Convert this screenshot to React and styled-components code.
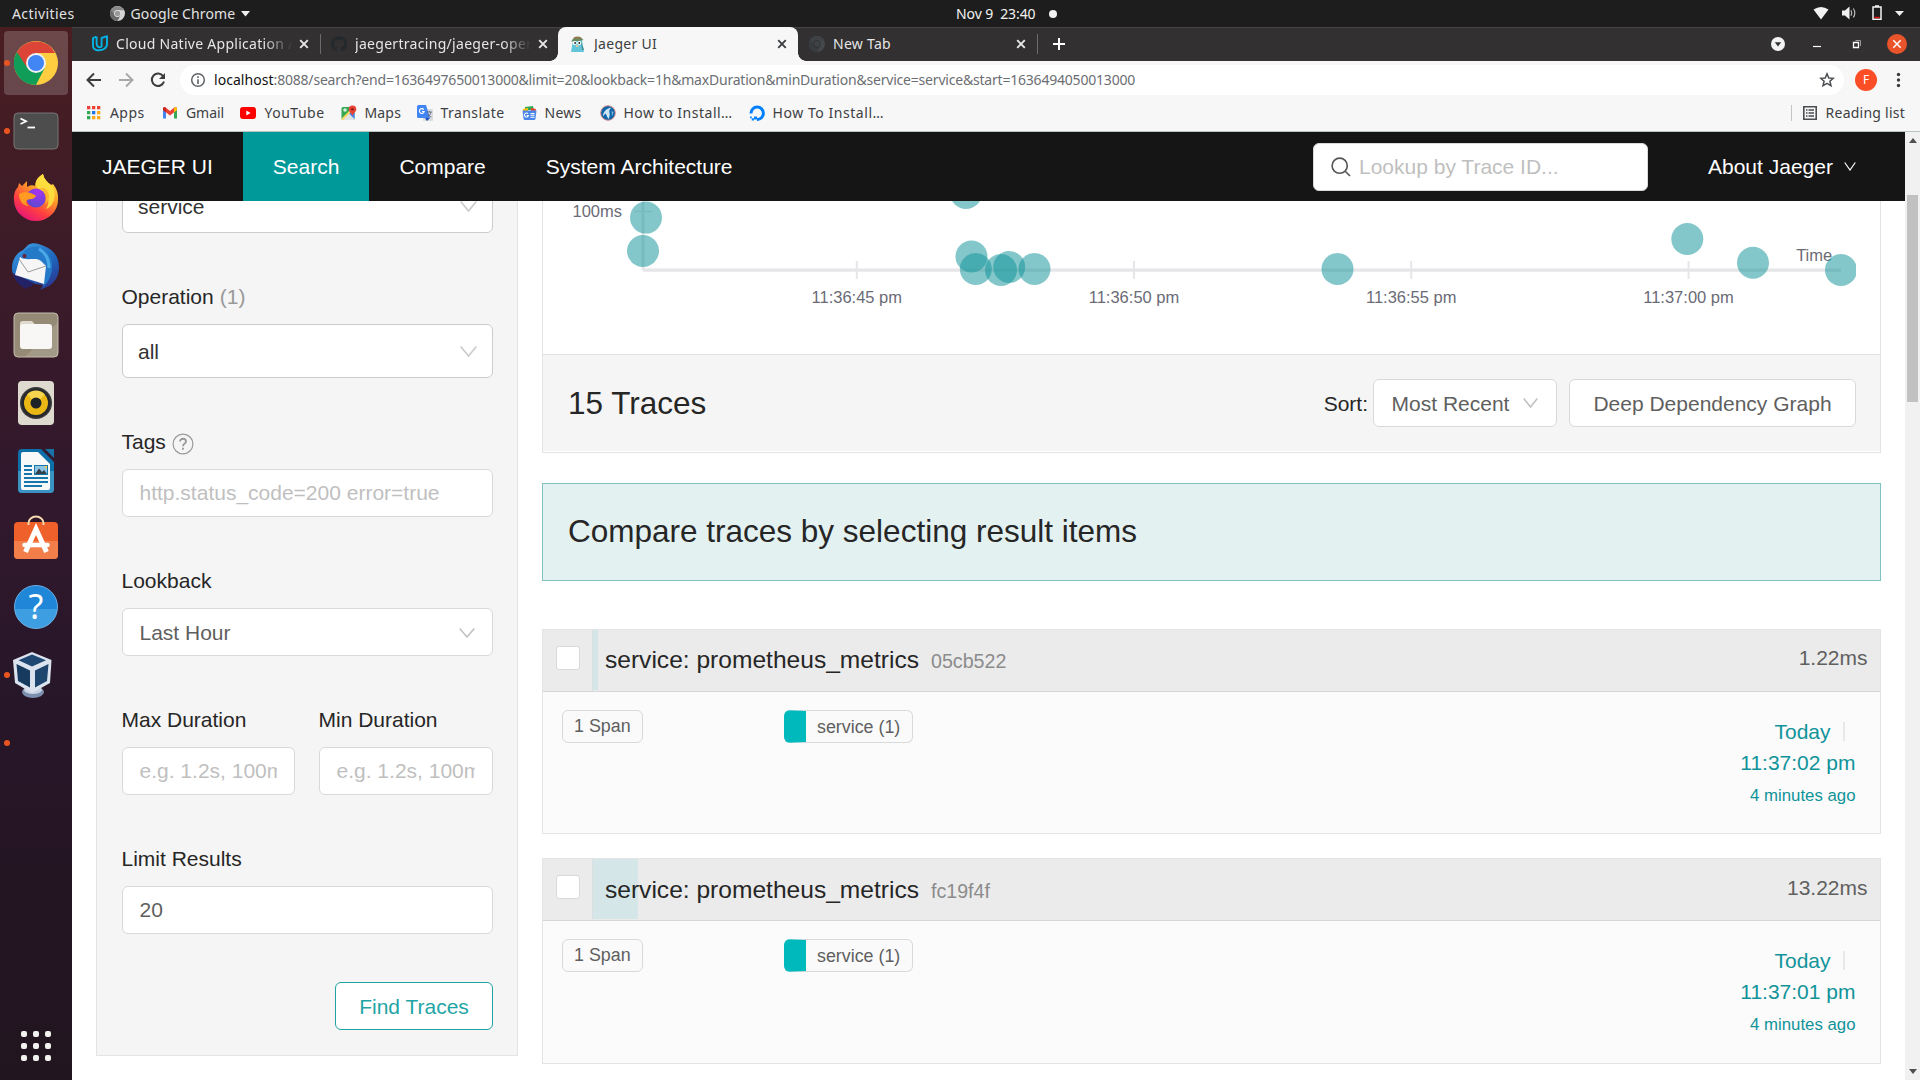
import React from "react";
import styled, { createGlobalStyle, css } from "styled-components";

const GlobalStyle = createGlobalStyle`
  * { box-sizing: border-box; }
  html, body { margin: 0; padding: 0; overflow: hidden; background: #fff; }
  svg { display: block; flex: none; }
`;

const systemFont = '"Noto Sans", "Open Sans", sans-serif';
const pageFont = '"Liberation Sans", Arial, sans-serif';

/* ---------- desktop ---------- */

const Desktop = styled.div`
  width: 1920px;
  height: 1080px;
  display: flex;
  flex-direction: column;
  overflow: hidden;
  font-family: ${systemFont};
  font-size: 14px;
`;

const UiText = styled.span`
  white-space: pre;
  line-height: 20px;
  letter-spacing: ${(p) => p.$track || 0}px;
`;

const TopBar = styled.header`
  height: 27px;
  flex: none;
  background: #1d1d1d;
  color: #e2e2e2;
  display: flex;
  align-items: center;
`;

const TopLeft = styled.div`
  width: 956px;
  display: flex;
  align-items: center;
  padding-left: 12px;
`;

const AppMenu = styled.div`
  display: flex;
  align-items: center;
  gap: 6px;
  margin-left: 35px;
`;

const Clock = styled.div`
  display: flex;
  align-items: center;
  gap: 14px;
  color: #f2f2f2;
`;

const Dot = styled.i`
  width: ${(p) => p.$size}px;
  height: ${(p) => p.$size}px;
  border-radius: 50%;
  background: ${(p) => p.$color};
  flex: none;
`;

const Status = styled.div`
  margin-left: auto;
  display: flex;
  align-items: center;
  padding-right: 16px;
`;

const Body = styled.div`
  flex: 1;
  min-height: 0;
  display: flex;
`;

/* ---------- dock ---------- */

const Dock = styled.aside`
  width: 72px;
  flex: none;
  display: flex;
  flex-direction: column;
  align-items: center;
  gap: 4px;
  padding-top: 4px;
  background: linear-gradient(180deg, #4a1e20 0%, #3f1c27 16%, #31182d 45%, #281629 62%, #21151f 100%);
`;

const DockItem = styled.div`
  position: relative;
  width: 64px;
  height: 64px;
  border-radius: 4px;
  display: flex;
  align-items: center;
  justify-content: center;
  padding-bottom: ${(p) => p.$lift || 0}px;
  background: ${(p) => (p.$focused ? "rgba(255,255,255,0.19)" : "transparent")};
  ${(p) =>
    p.$running &&
    css`
      &::before {
        content: "";
        position: absolute;
        left: 0;
        top: 29px;
        width: 6px;
        height: 6px;
        border-radius: 50%;
        background: #e95420;
      }
    `}
`;

const AppGrid = styled.div`
  margin-top: auto;
  margin-bottom: 19px;
  display: grid;
  grid-template-columns: repeat(3, 6px);
  grid-auto-rows: 6px;
  gap: 6px;
`;

const GridDot = styled.i`
  background: #f2f2f0;
  border-radius: 2px;
`;

/* ---------- browser ---------- */

const Browser = styled.main`
  flex: 1;
  min-width: 0;
  display: flex;
  flex-direction: column;
`;

const TabStrip = styled.div`
  height: 34px;
  flex: none;
  background: #323031;
  border-top: 1px solid #464445;
  display: flex;
  align-items: stretch;
  padding-left: 9px;
`;

const Tab = styled.div`
  position: relative;
  width: 239px;
  display: flex;
  align-items: center;
  padding: 0 8px 2px 11px;
  gap: 8px;
  color: ${(p) => (p.$active ? "#3c4043" : "#e6e6e6")};
  ${(p) =>
    p.$active &&
    css`
      background: #f7f7f7;
      width: 240px;
      margin: -1px 0 0 -1px;
      padding: 1px 8px 2px 12px;
      border-radius: 8px 8px 0 0;
      &::before,
      &::after {
        content: "";
        position: absolute;
        bottom: 0;
        width: 8px;
        height: 8px;
      }
      &::before {
        left: -8px;
        background: radial-gradient(circle at 0 0, #323031 7.5px, #f7f7f7 8px);
      }
      &::after {
        right: -8px;
        background: radial-gradient(circle at 100% 0, #323031 7.5px, #f7f7f7 8px);
      }
    `}
  ${(p) =>
    p.$divided &&
    css`
      &::after {
        content: "";
        position: absolute;
        right: -1px;
        top: 6px;
        width: 1px;
        height: 20px;
        background: #6d6b6c;
      }
    `}
`;

const TabLabel = styled.div`
  flex: 1;
  min-width: 0;
  overflow: hidden;
  white-space: nowrap;
  margin-right: -4px;
  ${(p) => p.$fade && "mask-image: linear-gradient(90deg, #000 84%, transparent 100%);"}
`;

const NewTab = styled.div`
  display: flex;
  align-items: center;
  padding: 0 0 2px 15px;
`;

const WindowControls = styled.div`
  margin-left: auto;
  display: flex;
  align-items: center;
  padding: 0 13px 1px 0;
`;

const Toolbar = styled.div`
  height: 38px;
  flex: none;
  background: #f7f7f7;
  display: flex;
  align-items: center;
  padding: 0 19px 0 13px;
`;

const NavButtons = styled.div`
  display: flex;
  gap: 14px;
  width: 95px;
`;

const AddressBar = styled.div`
  flex: 1;
  height: 30px;
  border-radius: 15px;
  background: #fff;
  display: flex;
  align-items: center;
  padding: 0 9px 1px 10px;
  gap: 8px;
  color: #6b6e72;
`;

const Url = styled.div`
  flex: 1;
  white-space: pre;
  letter-spacing: -0.204px;
  b {
    font-weight: 400;
    color: #111;
    letter-spacing: 0.05px;
  }
`;

const Avatar = styled.div`
  width: 22px;
  height: 22px;
  border-radius: 50%;
  background: #fb4e26;
  color: #fff;
  font-size: 12px;
  line-height: 22px;
  text-align: center;
  margin: 0 19px 0 11px;
`;

const Bookmarks = styled.div`
  height: 33px;
  flex: none;
  background: #f7f7f7;
  border-bottom: 1px solid #b9c2bf;
  display: flex;
  align-items: center;
  padding: 0 15px 5px 15px;
  color: #3c4043;
`;

const Bookmark = styled.div`
  display: flex;
  align-items: center;
  gap: 8px;
  width: ${(p) => p.$width}px;
  svg { margin-right: ${(p) => p.$nudge || 0}px; }
`;

const ReadingList = styled.div`
  margin-left: auto;
  display: flex;
  align-items: center;
  gap: 9px;
  border-left: 1px solid #c4c4c4;
  height: 16px;
  padding-left: 11px;
`;

/* ---------- page ---------- */

const Viewport = styled.div`
  flex: 1;
  min-height: 0;
  display: flex;
  background: #fff;
`;

const Page = styled.div`
  flex: 1;
  min-width: 0;
  display: flex;
  flex-direction: column;
  font-family: ${pageFont};
  font-size: 21px;
  color: #262626;
`;

const NavBar = styled.nav`
  height: 69px;
  flex: none;
  background: #151515;
  color: #fff;
  display: flex;
  align-items: center;
`;

const NavItem = styled.div`
  height: 100%;
  padding: 0 30px;
  display: flex;
  align-items: center;
  white-space: nowrap;
  background: ${(p) => (p.$active ? "#009999" : "transparent")};
`;

const TraceLookup = styled.div`
  margin-left: auto;
  width: 335px;
  height: 48px;
  background: #fff;
  border: 1px solid #d9d9d9;
  border-radius: 6px;
  display: flex;
  align-items: center;
  gap: 8px;
  padding-left: 17px;
  color: #bfbfbf;
`;

const About = styled.div`
  margin-left: 60px;
  width: 197px;
  display: flex;
  align-items: center;
  gap: 11px;
`;

const Scroller = styled.div`
  flex: 1;
  min-height: 0;
  overflow: hidden;
`;

const Columns = styled.div`
  margin-top: -22px;
  padding: 0 24px;
  display: grid;
  grid-template-columns: 422px 1339px;
  gap: 24px;
  align-items: start;
`;

const SearchPanel = styled.section`
  background: #f5f5f5;
  border: 1px solid #e4e4e4;
  border-top: 0;
  padding: 0 24px 25px 25px;
`;

const FieldRow = styled.div`
  display: grid;
  grid-template-columns: ${(p) => (p.$split ? "173px 174px" : "1fr")};
  gap: 24px;
  margin-bottom: 48px;
`;

const Label = styled.div`
  height: 43px;
  line-height: 31.5px;
  display: flex;
  gap: 6px;
  align-items: flex-start;
  margin-left: -0.5px;
  svg { margin-top: 7px; }
`;

const Muted = styled.span`
  color: #999;
`;

const Control = styled.div`
  height: ${(p) => (p.$tall ? 54 : 48)}px;
  border: 1px solid ${(p) => (p.$tall ? "#cccccc" : "#d9d9d9")};
  border-radius: 6px;
  background: #fff;
  padding: ${(p) => (p.$tall ? "1px 15px 0" : p.$select ? "1px 17px 0 16.5px" : "0 17px 0 16.5px")};
  display: flex;
  align-items: center;
  justify-content: space-between;
  color: ${(p) => (p.$placeholder ? "#bfbfbf" : p.$tall ? "#333" : "#5f5f5f")};
  span { overflow: hidden; white-space: nowrap; line-height: 32px; }
`;

const Actions = styled.div`
  display: flex;
  justify-content: flex-end;
`;

const Button = styled.div`
  height: 48px;
  width: ${(p) => p.$width}px;
  padding-top: 2px;
  border: 1px solid ${(p) => (p.$primary ? "#1fa3a3" : "#d9d9d9")};
  border-radius: 6px;
  background: #fff;
  color: ${(p) => (p.$primary ? "#1fa5a5" : "#5f5f5f")};
  display: flex;
  align-items: center;
  justify-content: center;
  gap: 14px;
  white-space: nowrap;
  svg { margin-top: -2px; }
`;

const Summary = styled.section`
  height: 274px;
  border: 1px solid #e4e4e4;
  border-top: 0;
`;

const SummaryHeader = styled.div`
  height: 97px;
  background: #f5f5f5;
  border-top: 1px solid #e2e2e2;
  display: flex;
  align-items: center;
  padding: 0 24px 0 25px;
`;

const Heading = styled.h2`
  margin: 0;
  font-size: 31.5px;
  font-weight: 400;
  line-height: 38px;
  flex: 1;
`;

const SortLabel = styled.span`
  margin-right: 5px;
  padding-top: 1px;
`;

const Spacer = styled.i`
  width: 12px;
`;

const CompareBanner = styled.section`
  height: 98px;
  margin-top: 30px;
  background: #e4f1f1;
  border: 1px solid #80c1c2;
  display: flex;
  align-items: center;
  padding: 0 0 2px 25px;
`;

const TraceList = styled.div`
  margin-top: 48px;
  display: flex;
  flex-direction: column;
  gap: 24px;
`;

const TraceCard = styled.article`
  height: 205.4px;
  border: 1px solid #e4e4e4;
  background: #fbfbfb;
`;

const TraceHeader = styled.div`
  height: 62px;
  background: #ebebeb;
  border-bottom: 1px solid #d6d6d6;
  display: flex;
`;

const CheckCell = styled.div`
  width: 49px;
  padding: 16px 0 0 13px;
`;

const Checkbox = styled.div`
  width: 24px;
  height: 24px;
  border: 1px solid #d9d9d9;
  border-radius: 3px;
  background: #fff;
`;

const TitleCell = styled.div`
  position: relative;
  flex: 1;
  display: flex;
  justify-content: space-between;
  padding: 12.2px 12.5px 0 12px;
  line-height: 36px;
  border-left: 1px solid #dadfe0;
`;

const DurationBar = styled.i`
  position: absolute;
  left: 0;
  top: 0;
  bottom: 1px;
  width: ${(p) => p.$percent}%;
  background: #d5e6e9;
`;

const TraceTitle = styled.h3`
  position: relative;
  margin: 0;
  font-size: 24.57px;
  font-weight: 400;
  small {
    margin-left: 12px;
    font-size: 19.66px;
    color: #8c8c8c;
  }
`;

const Duration = styled.span`
  position: relative;
  color: #5f5f5f;
  line-height: 32px;
`;

const TraceBody = styled.div`
  display: grid;
  grid-template-columns: 222px 1fr auto;
  padding: 18px 24.5px 0 19px;
  align-items: start;
`;

const Tag = styled.div`
  height: 33px;
  width: max-content;
  border: 1px solid #d9d9d9;
  border-radius: 6px;
  background: #fafafa;
  color: #5f5f5f;
  font-size: 17.85px;
  line-height: 31.2px;
  padding: 0 11.4px 0 11px;
  ${(p) =>
    p.$accent &&
    css`
      border-left: 22px solid ${p.$accent};
      line-height: 32px;
    `}
`;

const Started = styled.div`
  padding-top: 6px;
  text-align: right;
  line-height: 31px;
  color: #11939a;
`;

const DayLine = styled.div`
  display: flex;
  justify-content: flex-end;
  align-items: center;
  gap: 12px;
  padding-right: 11px;
  &::after {
    content: "";
    width: 2px;
    height: 19px;
    background: #e8e8e8;
  }
`;

const Ago = styled.div`
  font-size: 16.8px;
  padding-top: 1.5px;
`;

const Scrollbar = styled.div`
  width: 15px;
  flex: none;
  background: #f1f1f1;
  display: flex;
  flex-direction: column;
  align-items: center;
  padding: 6px 0;
`;

const Thumb = styled.i`
  width: 11px;
  height: 207px;
  margin: 52px 0 auto;
  background: #c1c1c1;
`;

const Arrow = styled.i`
  border: 4px solid transparent;
  border-width: 0 4.5px 5px;
  border-bottom-color: #505050;
  ${(p) => p.$down && "transform: rotate(180deg);"}
`;

/* ---------- drawings ---------- */

const Chevron = ({ w = 14, h = 9, color = "#bfbfbf", stroke = 1.5 }) => (
  <svg width={w} height={h} viewBox={`0 0 ${w} ${h}`} fill="none" stroke={color} strokeWidth={stroke}>
    <path d={`M0.7 0.5 L${w / 2} ${h - 1} L${w - 0.7} 0.5`} />
  </svg>
);

const ChromeLogo = ({ size = 44, mono, dark }) => {
  const [r, g, y, b, ring] = dark
    ? ["#3f4245", "#393c3f", "#45484b", "#3f4245", "#2f2f30"]
    : mono
    ? ["#8a8a8a", "#6a6a6a", "#d4d4d4", "#9a9a9a", "#e8e8e8"]
    : ["#db4437", "#0f9d58", "#ffcd40", "#4285f4", "#f1f1f1"];
  return (
    <svg width={size} height={size} viewBox="0 0 48 48">
      <circle cx="24" cy="24" r="24" fill={y} />
      <path d="M24 24 L3.2 12 A24 24 0 0 1 44.8 13 L45 13.2 L24 13.2z" fill={r} />
      <path d="M3.2 12 A24 24 0 0 0 24 48 L33.5 29.5 L24 24z" fill={g} />
      <path d="M3.2 12 L14.6 29.5 L24 24 L24 12z" fill={r} />
      <circle cx="24" cy="24" r="10.9" fill={ring} />
      <circle cx="24" cy="24" r="8.8" fill={b} />
    </svg>
  );
};

const Terminal = () => (
  <svg width="46" height="38" viewBox="0 0 46 38">
    <rect x="1" y="1" width="44" height="36" rx="4" fill="#4d4d4d" stroke="#777" strokeWidth="1" />
    <path d="M7.5 6.5 L13 9.3 L7.5 12" fill="none" stroke="#fff" strokeWidth="1.8" />
    <path d="M14.5 15.5h7.5" stroke="#fff" strokeWidth="1.8" />
  </svg>
);

const Firefox = () => (
  <svg width="46" height="48" viewBox="0 0 46 48">
    <defs>
      <linearGradient id="ffBody" x1="0.85" y1="0" x2="0.25" y2="1">
        <stop offset="0" stopColor="#fff04a" />
        <stop offset="0.4" stopColor="#ff9a28" />
        <stop offset="0.7" stopColor="#ff4040" />
        <stop offset="1" stopColor="#e5117e" />
      </linearGradient>
      <radialGradient id="ffCore" cx="0.6" cy="0.2" r="0.8">
        <stop offset="0" stopColor="#a832f0" />
        <stop offset="1" stopColor="#5a4ad0" />
      </radialGradient>
    </defs>
    <path d="M5 14 L6 10 L9 13 L14 8 V14 C17 12 20 12 22.500 13 C22 8 25 4 30 1 C31 6 34 9 38 12 L40 11 C44 16 45.500 21 45 27 A22 21 0 0 1 1 27 C0.500 22 2 17 5 14z" fill="url(#ffBody)" />
    <path d="M22.500 13 C22 8 25 4 30 1 C31 6 34 9 38 12 C44 17 43 33 33 36 C38 29 35 20 28 18z" fill="#ffe03f" opacity="0.9" />
    <circle cx="23" cy="25" r="9.600" fill="url(#ffCore)" />
    <path d="M6 21 C11 18 17 19 23 22.500 C22 26 18 26 15 26.500 C12 28 13 31 16 33 C10 33 6 28 6 21z" fill="#ff9a22" />
    <path d="M26 15 C33 18 35 25 32 31 C38 27 37 18 31 15z" fill="#ffb52d" />
  </svg>
);

const Thunderbird = () => (
  <svg width="50" height="50" viewBox="0 0 50 50">
    <defs>
      <linearGradient id="tb" x1="0.2" y1="0" x2="0.8" y2="1">
        <stop offset="0" stopColor="#3d9be0" />
        <stop offset="0.5" stopColor="#1e68bf" />
        <stop offset="1" stopColor="#2a3590" />
      </linearGradient>
    </defs>
    <path d="M17 3c4-3 10-2 16 1 9 3 15 11 15 21 0 9-4 15-10 19l-9 4 3-5-14-2C8 42 1 36 1 26 1 18 5 11 12 8z" fill="url(#tb)" />
    <path d="M2 31c1 7 6 13 14 16l2-4 1 3 4-5z" fill="#242266" />
    <path d="M11 15c1-7 7-11 15-10 8 1 14 7 15 16 1 8-2 18-9 24 2-9 2-19-3-25-5-5-12-1-18-5z" fill="#2479c8" />
    <path d="M28 7c7 4 10 10 10 19" fill="none" stroke="#4ba9e8" strokeWidth="3" />
    <path d="M9 15 C15 20 26 14 31 20 L35 24 L33 42 L4 33z" fill="#f6f6f6" />
    <path d="M8 17 L17 30 L35 24" fill="none" stroke="#9b9b9b" strokeWidth="1" />
    <circle cx="13.500" cy="14" r="2" fill="#6d2338" />
  </svg>
);

const Files = () => (
  <svg width="46" height="46" viewBox="0 0 46 46">
    <rect x="1" y="1" width="44" height="44" rx="4" fill="#958a76" />
    <path d="M12 45 L45 10 V41a4 4 0 0 1-4 4z" fill="#a39987" />
    <rect x="1" y="1" width="44" height="44" rx="4" fill="none" stroke="#c4bdae" />
    <path d="M7 12a2.500 2.500 0 0 1 2.500-3H19l3 3.500V18H7z" fill="#dedad0" />
    <rect x="7" y="12" width="32" height="25" rx="3" fill="#f8f7f5" />
  </svg>
);

const Speaker = () => (
  <svg width="38" height="46" viewBox="0 0 38 46">
    <rect x="1" y="1" width="36" height="44" rx="4" fill="#dfdad0" />
    <circle cx="19" cy="23" r="16" fill="#3a3a3a" />
    <circle cx="19" cy="23" r="14.500" fill="#26282b" />
    <circle cx="19" cy="23" r="12" fill="#eab815" />
    <path d="M19 23 L10 14.500 A12 12 0 0 1 28 14.500z" fill="#f6d44e" />
    <circle cx="19" cy="23" r="5.500" fill="#1d2226" />
  </svg>
);

const Writer = () => (
  <svg width="38" height="46" viewBox="0 0 38 46">
    <path d="M5 1h19l13 13v27a4 4 0 0 1-4 4H5a4 4 0 0 1-4-4V5a4 4 0 0 1 4-4z" fill="#0d6fa8" />
    <path d="M1 23h36v18a4 4 0 0 1-4 4H5a4 4 0 0 1-4-4z" fill="#3b93c4" />
    <path d="M28 1h9v9z" fill="#1772a6" />
    <path d="M6 4h15l12 12v24a2 2 0 0 1-2 2H6a2 2 0 0 1-2-2V6a2 2 0 0 1 2-2z" fill="#f7f8f8" />
    <path d="M7 18h8M7 22h8M7 26h8M7 30h24M7 34h24M7 38h18" stroke="#1478ac" strokeWidth="1.900" />
    <rect x="17.500" y="17.500" width="13" height="9" fill="#8cc5e4" stroke="#1478ac" />
    <path d="M18 26 L22 20.500 L25 24 L27 22 L30 26z" fill="#333f49" />
    <path d="M27 18h3v3z" fill="#f7cc46" />
  </svg>
);

const SoftwareIcon = () => (
  <svg width="46" height="46" viewBox="0 0 46 46">
    <rect x="1" y="8" width="44" height="37" rx="4" fill="#f0602a" />
    <path d="M1 27h44v14a4 4 0 0 1-4 4H5a4 4 0 0 1-4-4z" fill="#f37e4a" />
    <path d="M15.500 11V9a7.500 6.500 0 0 1 15 0v2" fill="none" stroke="#f4d9ae" strokeWidth="2" />
    <path d="M12.500 38 L23 15 L33.500 38" fill="none" stroke="#fff" strokeWidth="5" />
    <path d="M11.500 31h23" stroke="#fff" strokeWidth="4.500" strokeLinecap="round" />
  </svg>
);

const HelpGlyph = styled.div`
  width: 44px;
  height: 44px;
  border-radius: 50%;
  background: linear-gradient(180deg, #1f86d8 55%, #3d9fe2 55%);
  border: 1px solid #6cb2e8;
  color: #fff;
  font: 34px/41px "Noto Sans", sans-serif;
  text-align: center;
`;

const VirtualBox = () => (
  <svg width="54" height="50" viewBox="0 0 54 50">
    <ellipse cx="24" cy="42" rx="11" ry="6" fill="#7c8fae" />
    <ellipse cx="24" cy="40" rx="9" ry="4" fill="#c8d3e4" />
    <path d="M23 2 L42.500 10 L41 33 L23 43 L6 33 L4 10z" fill="#dbe3ee" />
    <path d="M23 4.500 L37 10.200 L23 16.500 L9.500 10.200z" fill="#1e4872" />
    <path d="M7.500 14 L21 20.500 V37.500 L9 31z" fill="#173a5f" />
    <path d="M26 20.500 L39.500 14 L38 31 L26 37.500z" fill="#1d456e" />
  </svg>
);

const Udacity = () => (
  <svg width="16" height="17" viewBox="0 0 16 17" fill="none" stroke="#02b3e4" strokeWidth="1.900">
    <path d="M4.600 1.700 L1 3.200 V10.500 a4.500 4.500 0 0 0 5 4.700" strokeLinejoin="round" />
    <path d="M4.600 1.700 V8.500 c0 3.500 2.500 4.500 5 3 V3 L15 1.200 V9 c0 4-4 6.500-9 6.200" strokeLinejoin="round" />
  </svg>
);

const GitHub = () => (
  <svg width="16" height="16" viewBox="0 0 16 16" fill="#24292e">
    <path d="M8 0C3.580 0 0 3.580 0 8c0 3.540 2.290 6.530 5.470 7.590.4.070.55-.17.55-.38v-1.490c-2.010.37-2.530-.49-2.690-.94-.09-.23-.48-.94-.82-1.130-.28-.15-.68-.52-.01-.53.63-.01 1.080.58 1.230.82.72 1.210 1.870.87 2.330.66.070-.52.28-.87.510-1.070-1.780-.2-3.640-.89-3.640-3.950 0-.87.310-1.590.82-2.150-.08-.2-.36-1.020.08-2.120 0 0 .67-.21 2.200.82a7.600 7.600 0 0 1 4 0c1.530-1.040 2.200-.82 2.200-.82.44 1.100.16 1.920.08 2.120.51.56.82 1.270.82 2.150 0 3.070-1.870 3.750-3.650 3.950.29.25.54.73.54 1.480v2.190c0 .21.15.46.55.38A8 8 0 0 0 16 8c0-4.420-3.580-8-8-8z" />
  </svg>
);

const Gopher = () => (
  <svg width="16" height="17" viewBox="0 0 16 17">
    <path d="M3 5h9l2 12H1z" fill="#62c6d8" />
    <path d="M1 6.500 L4 2.500 a4.500 3 0 0 1 7 0 L13.500 5 L9 6z" fill="#6d8a62" />
    <path d="M4 2.800h7" stroke="#b0703c" strokeWidth="1" />
    <circle cx="4.800" cy="8" r="2.100" fill="#fff" />
    <circle cx="9.300" cy="8" r="2.100" fill="#fff" />
    <circle cx="5.100" cy="8" r="0.900" fill="#1b1b1b" />
    <circle cx="9.300" cy="8" r="0.900" fill="#1b1b1b" />
    <path d="M6 10h2.500v2H6z" fill="#d8c6a4" />
    <path d="M11 6l3 9h-2z" fill="#4a8f93" />
  </svg>
);

const Close = ({ color = "#e8e8e8" }) => (
  <svg width="16" height="16" viewBox="0 0 16 16" stroke={color} strokeWidth="1.900">
    <path d="M4.200 4.200 L11.800 11.800 M11.800 4.200 L4.200 11.800" />
  </svg>
);

const appTiles = ["#ea4335", "#ea4335", "#ea4335", "#34a853", "#1a73e8", "#fbaa19", "#34a853", "#fbaa19", "#fbaa19"];

const AppsIcon = () => (
  <svg width="14" height="14" viewBox="0 0 14 14">
    {appTiles.map((c, i) => (
      <rect key={i} x={(i % 3) * 5} y={Math.floor(i / 3) * 5} width="3.300" height="3.300" fill={c} />
    ))}
  </svg>
);

const GmailIcon = () => (
  <svg width="16" height="12" viewBox="0 0 16 12">
    <path d="M1 2.500v9h3V5z" fill="#4285f4" />
    <path d="M15 2.500v9h-3V5z" fill="#34a853" />
    <path d="M1 3V1.500C1 0 3 0 4 .800L8 4l4-3.200C13 0 15 0 15 1.500V3L8 8.500z" fill="#ea4335" />
    <path d="M12 .800c1-.800 3-.800 3 .700V3l-3 2.400z" fill="#fbbc04" />
    <path d="M1 1.500C1 0 3 0 4 .800v4.600L1 3z" fill="#c5221f" />
  </svg>
);

const YouTubeIcon = () => (
  <svg width="16" height="12" viewBox="0 0 16 12">
    <rect width="16" height="12" rx="3" fill="#f00" />
    <path d="M6.300 3.500 L10.600 6 L6.300 8.500z" fill="#fff" />
  </svg>
);

const MapsIcon = () => (
  <svg width="16" height="16" viewBox="0 0 16 16">
    <rect x="0.500" y="2" width="13" height="13" rx="1.500" fill="#34a853" />
    <path d="M0.500 15 L8 7.500 L14 13.500 L12.500 15z" fill="#dfe3e6" />
    <path d="M8 8.500 L13.500 14 V7z" fill="#4285f4" />
    <path d="M1 14.500 L12 3.500" stroke="#fdd663" strokeWidth="2" />
    <circle cx="4" cy="5" r="1.800" fill="#d7efdd" />
    <path d="M11.500 0.500a3.800 3.800 0 0 1 3.800 3.800c0 2.500-2.800 3.700-3.800 7-1-3.300-3.800-4.500-3.800-7A3.800 3.800 0 0 1 11.500.5z" fill="#ea4335" />
    <circle cx="11.500" cy="4.200" r="1.300" fill="#8c1d18" />
  </svg>
);

const TranslateIcon = () => (
  <svg width="16" height="16" viewBox="0 0 16 16">
    <rect x="6" y="4" width="10" height="12" rx="1" fill="#dadce0" />
    <path d="M1.500 0h7.500l4 13H1.500A1.500 1.500 0 0 1 0 11.500v-10A1.500 1.500 0 0 1 1.500 0z" fill="#4285f4" />
    <path d="M8 13h5l-3 3z" fill="#1c51b5" />
    <path d="M6.800 4.600 A2.400 2.400 0 1 0 7.200 6.500 H5" fill="none" stroke="#fff" strokeWidth="1.100" />
    <path d="M9.800 7h5M12.300 6v1M14 7c-.5 2.500-2 4-3.500 5M11 9c.8 1.500 2 2.500 3.500 3" fill="none" stroke="#5f6b7a" strokeWidth="0.900" />
  </svg>
);

const NewsIcon = () => (
  <svg width="15" height="14" viewBox="0 0 15 14">
    <path d="M3 1l8-1 1 4H3z" fill="#34a853" />
    <path d="M1 3l5-1v4H1z" fill="#fbbc04" />
    <path d="M9 2l5 1-1 4H9z" fill="#ea4335" />
    <path d="M0.500 4.500h14l-1 8a1.500 1.500 0 0 1-1.500 1.500H3a1.500 1.500 0 0 1-1.500-1.500z" fill="#4a86e8" />
    <path d="M6 7.700A2 2 0 1 0 6.400 9.500H4.800M8.500 7.500h4M8.500 9.300h4M8.500 11.200h4" fill="none" stroke="#fff" strokeWidth="1.100" />
  </svg>
);

const GlobeBadge = () => (
  <svg width="16" height="16" viewBox="0 0 16 16">
    <circle cx="8" cy="8" r="7.300" fill="#0d66a8" stroke="#d98a88" strokeWidth="1" />
    <path d="M3 11.500C3 7 6 3.500 11.500 2.500 9 4.500 9 6 9.500 8c.5 2 0 4-1 6C7 12 6.500 9.500 5.500 8.500 4.500 9.500 3.500 10.500 3 11.500z" fill="#cfe6f5" />
    <path d="M11.500 5.500l2 2-1.500 4z" fill="#7db7dc" />
  </svg>
);

const DigitalOcean = () => (
  <svg width="16" height="16" viewBox="0 0 16 16">
    <path d="M2 8.500 A6.200 6.200 0 1 1 8 14.500" fill="none" stroke="#0080ff" strokeWidth="3" />
    <path d="M5 11.500h3v3H5zM2.700 13.300h2.200v2.200H2.700zM1 11.500h1.700v1.700H1z" fill="#0080ff" />
  </svg>
);

const axisTicks = [
  [313.8, "11:36:45 pm"],
  [591, "11:36:50 pm"],
  [868.2, "11:36:55 pm"],
  [1145.500, "11:37:00 pm"],
];
const points = [
  [103, 38.600], [100, 72], [423, 14], [428.500, 77.500], [432.800, 90], [458, 91],
  [466.200, 88], [491.500, 90], [794.500, 90], [1144.300, 60], [1210, 83.700], [1298, 91],
];

const ChartText = styled.text`
  font: 16.5px ${pageFont};
  fill: #6b6b76;
  text-anchor: ${(p) => p.$anchor || "middle"};
`;

const ScatterPlot = () => (
  <svg width="1313" height="175" viewBox="0 0 1313 175">
    <path d="M100 0V91" stroke="#e6e6e9" strokeWidth="3" />
    <path d="M91 32.500h18" stroke="#e6e6e9" strokeWidth="1.500" />
    <path d="M100 91.200H1298" stroke="#e6e6e9" strokeWidth="3.200" />
    <ChartText x="79" y="38" $anchor="end">100ms</ChartText>
    {axisTicks.map(([x, label]) => (
      <g key={label}>
        <path d={`M${x} 82v18`} stroke="#e6e6e9" strokeWidth="2" />
        <ChartText x={x} y="124">{label}</ChartText>
      </g>
    ))}
    <ChartText x="1289.200" y="82" $anchor="end">Time</ChartText>
    {points.map(([x, y], i) => (
      <circle key={i} cx={x} cy={y} r="16" fill="#12939a" fillOpacity="0.52" />
    ))}
  </svg>
);

/* ---------- data ---------- */

const dockItems = [
  { icon: <ChromeLogo />, focused: true, running: true },
  { icon: <Terminal />, running: true },
  { icon: <Firefox />, lift: 4 },
  { icon: <Thunderbird /> },
  { icon: <Files /> },
  { icon: <Speaker /> },
  { icon: <Writer /> },
  { icon: <SoftwareIcon />, lift: 5 },
  { icon: <HelpGlyph>?</HelpGlyph> },
  { icon: <VirtualBox />, running: true },
  { icon: null, running: true },
];

const bookmarks = [
  { icon: <AppsIcon />, text: "Apps", width: 75, track: 0.41, nudge: 1 },
  { icon: <GmailIcon />, text: "Gmail", width: 78, track: -0.07 },
  { icon: <YouTubeIcon />, text: "YouTube", width: 100.5, track: 0.49, nudge: 0.5 },
  { icon: <MapsIcon />, text: "Maps", width: 76, track: 0.16 },
  { icon: <TranslateIcon />, text: "Translate", width: 105, track: 0.42 },
  { icon: <NewsIcon />, text: "News", width: 78, track: 0.26 },
  { icon: <GlobeBadge />, text: "How to Install…", width: 149, track: 0.5 },
  { icon: <DigitalOcean />, text: "How To Install…", width: 136, track: 0.55 },
];

const traces = [
  { id: "05cb522", duration: "1.22ms", time: "11:37:02 pm", percent: 0.36 },
  { id: "fc19f4f", duration: "13.22ms", time: "11:37:01 pm", percent: 3.52 },
];

/* ---------- sections ---------- */

const SystemBar = () => (
  <TopBar>
    <TopLeft>
      <UiText $track={0.42}>Activities</UiText>
      <AppMenu>
        <ChromeLogo size={15} mono />
        <UiText $track={0.1}>Google Chrome</UiText>
        <svg width="9" height="6" viewBox="0 0 9 6"><path d="M0 0h9L4.500 5.500z" fill="#eee" /></svg>
      </AppMenu>
    </TopLeft>
    <Clock>
      <UiText $track={-0.1}>{"Nov 9  23:40"}</UiText>
      <Dot $size={8} $color="#f2f2f2" />
    </Clock>
    <Status>
      <svg width="91" height="17" viewBox="1813 5 91 17">
        <path d="M1813.500 9.500 Q1821 4.500 1828.500 9.500 L1821 19.500z" fill="#f2f2f2" />
        <path d="M1842 10.500h3l4.500-4v13l-4.500-4h-3z" fill="#f2f2f2" />
        <path d="M1851 10.300q1.500 2.700 0 5.400M1853.300 8.500q3 4.500 0 9" fill="none" stroke="#bbb" strokeWidth="1.200" />
        <path d="M1873 7h8v12.300h-8zM1875 6h4" fill="none" stroke="#f2f2f2" strokeWidth="1.500" />
        <path d="M1874.300 17.500h5.400" stroke="#d01414" strokeWidth="1.500" />
        <path d="M1895 11h9l-4.500 5z" fill="#eee" />
      </svg>
    </Status>
  </TopBar>
);

const Tabs = () => (
  <TabStrip>
    <Tab $divided>
      <Udacity />
      <TabLabel $fade><UiText $track={0.28}>Cloud Native Application A</UiText></TabLabel>
      <Close />
    </Tab>
    <Tab>
      <GitHub />
      <TabLabel $fade><UiText $track={0.3}>jaegertracing/jaeger-oper</UiText></TabLabel>
      <Close />
    </Tab>
    <Tab $active>
      <Gopher />
      <TabLabel><UiText $track={0.28}>Jaeger UI</UiText></TabLabel>
      <Close color="#3c4043" />
    </Tab>
    <Tab $divided>
      <ChromeLogo size={16} dark />
      <TabLabel><UiText $track={0.28}>New Tab</UiText></TabLabel>
      <Close />
    </Tab>
    <NewTab>
      <svg width="14" height="14" viewBox="0 0 14 14" stroke="#fff" strokeWidth="2"><path d="M7 1v12M1 7h12" /></svg>
    </NewTab>
    <WindowControls>
      <svg width="137" height="20" viewBox="1770 34 137 20">
        <circle cx="1778" cy="44" r="7" fill="#f3f3f3" />
        <path d="M1774.800 42.200h6.400l-3.200 4.300z" fill="#323031" />
        <path d="M1813 46.500h8" stroke="#fff" strokeWidth="1.200" />
        <path d="M1853.500 42.500h5v5h-5z" fill="none" stroke="#fff" strokeWidth="1.300" />
        <path d="M1855.500 40.500h5v5.500" fill="none" stroke="#9a9a9a" strokeWidth="1" />
        <circle cx="1897" cy="44" r="10" fill="#e9542b" />
        <path d="M1893.300 40.300l7.400 7.400M1900.700 40.300l-7.400 7.400" stroke="#fff" strokeWidth="1.500" />
      </svg>
    </WindowControls>
  </TabStrip>
);

const AddressRow = () => (
  <Toolbar>
    <NavButtons>
      <svg width="18" height="18" viewBox="0 0 18 18" fill="none" stroke="#3c3c3c" strokeWidth="2"><path d="M16 9H3M9 2.500 L2.500 9 L9 15.500" /></svg>
      <svg width="18" height="18" viewBox="0 0 18 18" fill="none" stroke="#a8a8a8" strokeWidth="1.900"><path d="M2 9h13M9 2.500 L15.500 9 L9 15.500" /></svg>
      <svg width="18" height="18" viewBox="0 0 18 18"><path d="M14.200 5.200 A6.200 6.200 0 1 0 15 10.500" fill="none" stroke="#3c3c3c" strokeWidth="2" /><path d="M16 2v6h-6z" fill="#3c3c3c" /></svg>
    </NavButtons>
    <AddressBar>
      <svg width="16" height="16" viewBox="0 0 16 16"><circle cx="8" cy="8" r="6.300" fill="none" stroke="#5f6368" strokeWidth="1.500" /><path d="M8 7.300V12M8 4.200v1.700" stroke="#5f6368" strokeWidth="1.600" /></svg>
      <Url><b>localhost</b>:8088/search?end=1636497650013000&amp;limit=20&amp;lookback=1h&amp;maxDuration&amp;minDuration&amp;service=service&amp;start=1636494050013000</Url>
      <svg width="16" height="16" viewBox="0 0 16 16"><path d="M8 1.800 L9.800 6 L14.300 6.300 L10.900 9.300 L12 13.800 L8 11.400 L4 13.800 L5.100 9.300 L1.700 6.300 L6.200 6z" fill="none" stroke="#4a4d51" strokeWidth="1.500" /></svg>
    </AddressBar>
    <Avatar>F</Avatar>
    <svg width="5" height="16" viewBox="0 0 5 16" fill="#3c3c3c"><circle cx="2.500" cy="2.500" r="1.700" /><circle cx="2.500" cy="8" r="1.700" /><circle cx="2.500" cy="13.500" r="1.700" /></svg>
  </Toolbar>
);

const BookmarkRow = () => (
  <Bookmarks>
    {bookmarks.map((b) => (
      <Bookmark key={b.text} $width={b.width} $nudge={b.nudge}>
        {b.icon}
        <UiText $track={b.track}>{b.text}</UiText>
      </Bookmark>
    ))}
    <ReadingList>
      <svg width="14" height="14" viewBox="0 0 14 14" fill="none" stroke="#4a4d51"><path d="M.8.8h12.400v12.400H.8z" strokeWidth="1.600" /><path d="M3 4h1.500M3 7h1.500M3 10h1.500M5.500 4H11M5.500 7H11M5.500 10H11" strokeWidth="1.300" /></svg>
      <UiText $track={0.24}>Reading list</UiText>
    </ReadingList>
  </Bookmarks>
);

const SearchForm = () => (
  <SearchPanel>
    <FieldRow>
      <Control $tall><span>service</span><Chevron w={17} h={11} color="#ccc" stroke={1.700} /></Control>
    </FieldRow>
    <FieldRow>
      <div>
        <Label>Operation <Muted>(1)</Muted></Label>
        <Control $tall><span>all</span><Chevron w={17} h={11} color="#ccc" stroke={1.700} /></Control>
      </div>
    </FieldRow>
    <FieldRow>
      <div>
        <Label>
          Tags
          <svg width="22" height="22" viewBox="0 0 22 22" fill="none" stroke="#999"><circle cx="11" cy="11" r="9.900" strokeWidth="1.200" /><path d="M8 8.600c0-3.800 6-3.800 6 0 0 2.300-3 2.200-3 4.600M11 14.800v2" strokeWidth="1.800" /></svg>
        </Label>
        <Control $placeholder><span>http.status_code=200 error=true</span></Control>
      </div>
    </FieldRow>
    <FieldRow>
      <div>
        <Label>Lookback</Label>
        <Control $select><span>Last Hour</span><Chevron w={16} h={10} /></Control>
      </div>
    </FieldRow>
    <FieldRow $split>
      <div>
        <Label>Max Duration</Label>
        <Control $placeholder><span>e.g. 1.2s, 100ms</span></Control>
      </div>
      <div>
        <Label>Min Duration</Label>
        <Control $placeholder><span>e.g. 1.2s, 100ms</span></Control>
      </div>
    </FieldRow>
    <FieldRow>
      <div>
        <Label>Limit Results</Label>
        <Control><span>20</span></Control>
      </div>
    </FieldRow>
    <Actions><Button $primary $width={158}>Find Traces</Button></Actions>
  </SearchPanel>
);

const Results = () => (
  <div>
    <Summary>
      <ScatterPlot />
      <SummaryHeader>
        <Heading>15 Traces</Heading>
        <SortLabel>Sort:</SortLabel>
        <Button $width={184}>Most Recent<Chevron w={15} h={10} /></Button>
        <Spacer />
        <Button $width={287}>Deep Dependency Graph</Button>
      </SummaryHeader>
    </Summary>
    <CompareBanner><Heading>Compare traces by selecting result items</Heading></CompareBanner>
    <TraceList>
      {traces.map((t) => (
        <TraceCard key={t.id}>
          <TraceHeader>
            <CheckCell><Checkbox /></CheckCell>
            <TitleCell>
              <DurationBar $percent={t.percent} />
              <TraceTitle>service: prometheus_metrics<small>{t.id}</small></TraceTitle>
              <Duration>{t.duration}</Duration>
            </TitleCell>
          </TraceHeader>
          <TraceBody>
            <Tag>1 Span</Tag>
            <Tag $accent="#00b9bd">service (1)</Tag>
            <Started>
              <DayLine>Today</DayLine>
              <div>{t.time}</div>
              <Ago>4 minutes ago</Ago>
            </Started>
          </TraceBody>
        </TraceCard>
      ))}
    </TraceList>
  </div>
);

export default function App() {
  return (
    <Desktop>
      <GlobalStyle />
      <SystemBar />
      <Body>
        <Dock>
          {dockItems.map((d, i) => (
            <DockItem key={i} $focused={d.focused} $running={d.running} $lift={d.lift}>{d.icon}</DockItem>
          ))}
          <AppGrid>{Array.from({ length: 9 }, (_, i) => <GridDot key={i} />)}</AppGrid>
        </Dock>
        <Browser>
          <Tabs />
          <AddressRow />
          <BookmarkRow />
          <Viewport>
            <Page>
              <NavBar>
                <NavItem>JAEGER UI</NavItem>
                <NavItem $active>Search</NavItem>
                <NavItem>Compare</NavItem>
                <NavItem>System Architecture</NavItem>
                <TraceLookup>
                  <svg width="20" height="20" viewBox="0 0 20 20" fill="none" stroke="#555" strokeWidth="1.600"><circle cx="8.700" cy="8.700" r="7.600" /><path d="M14 14l5 5" /></svg>
                  Lookup by Trace ID...
                </TraceLookup>
                <About>About Jaeger<Chevron w={12} h={9} color="#fff" stroke={1.200} /></About>
              </NavBar>
              <Scroller>
                <Columns>
                  <SearchForm />
                  <Results />
                </Columns>
              </Scroller>
            </Page>
            <Scrollbar>
              <Arrow />
              <Thumb />
              <Arrow $down />
            </Scrollbar>
          </Viewport>
        </Browser>
      </Body>
    </Desktop>
  );
}
